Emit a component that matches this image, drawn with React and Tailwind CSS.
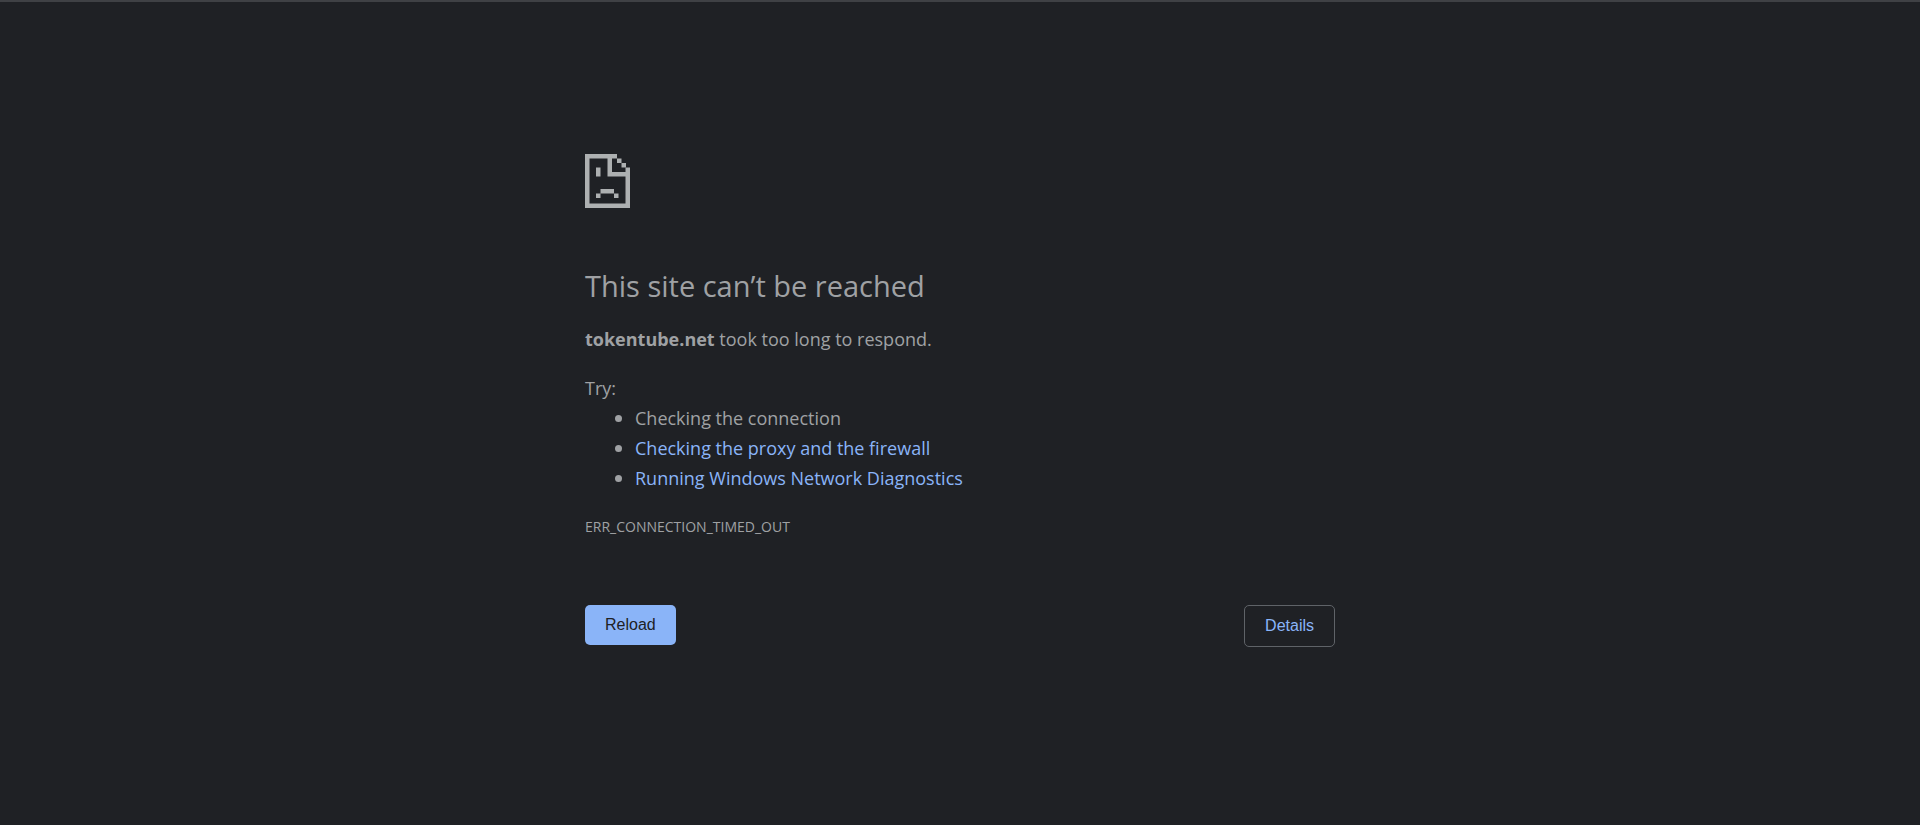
import React, { useState } from 'react';

const suggestions = [
  { label: 'Checking the connection' },
  { label: 'Checking the proxy and the firewall', href: '#proxy' },
  { label: 'Running Windows Network Diagnostics', href: '#diagnostics' },
];

function SadPageIcon() {
  return (
    <svg width="45" height="54" viewBox="0 0 45 54" fill="currentColor" className="text-[#adb0b1]" aria-hidden="true">
      {/* Page outline with folded corner */}
      <path d="M0 0h32v4.500H27V18h13.500v-4.500H45V54H0zM4.500 4.500v45h36v-27h-18v-18z" fillRule="evenodd" />
      <path d="M32 4.500h4.500V9H32zM36.500 9H41v4.500h-4.500z" />
      {/* Face */}
      <path d="M11 13.500h4.500v9H11zM15.500 35H29v4.500H15.500zM11 39.500h4.500V44H11zM29 39.500h4.500V44H29z" />
    </svg>
  );
}

export default function App() {
  const [showDetails, setShowDetails] = useState(false);

  return (
    <div className="min-h-screen bg-[#1f2125] border-t-2 border-[#3f4145] px-6 text-[#9fa1a4] text-[18px] leading-[30px] font-['Open_Sans','Noto_Sans',sans-serif]">
      <main className="mx-auto max-w-[750px] pt-[152px]">
        <SadPageIcon />

        <h1 className="mt-[60px] text-[29px] leading-[36px] font-normal">This site can’t be reached</h1>

        <p className="mt-5">
          <strong className="font-bold">tokentube.net</strong> took too long to respond.
        </p>

        <div className="mt-[19px]">
          <p>Try:</p>
          <ul className="pl-[30px]">
            {suggestions.map((item) => (
              <li key={item.label} className="flex items-center gap-[13px]">
                <span className="size-[7px] shrink-0 rounded-full bg-[#9fa1a4]" aria-hidden="true"></span>
                {item.href ? (
                  <a href={item.href} className="text-[#8ab4f8]">{item.label}</a>
                ) : (
                  <span>{item.label}</span>
                )}
              </li>
            ))}
          </ul>
        </div>

        <p className="mt-[19px] text-[14px]">ERR_CONNECTION_TIMED_OUT</p>

        <div className="mt-[63px] flex items-start justify-between font-['Liberation_Sans',sans-serif] text-[16px] leading-[20px]">
          <button
            type="button"
            onClick={() => window.location.reload()}
            className="rounded-[5px] bg-[#8ab4f8] px-5 py-[10px] text-[#202124] cursor-pointer"
          >
            Reload
          </button>
          <button
            type="button"
            aria-expanded={showDetails}
            onClick={() => setShowDetails(!showDetails)}
            className="rounded-[5px] border border-[#5f6368] px-5 py-[10px] text-[#8ab4f8] cursor-pointer"
          >
            Details
          </button>
        </div>
      </main>
    </div>
  );
}
